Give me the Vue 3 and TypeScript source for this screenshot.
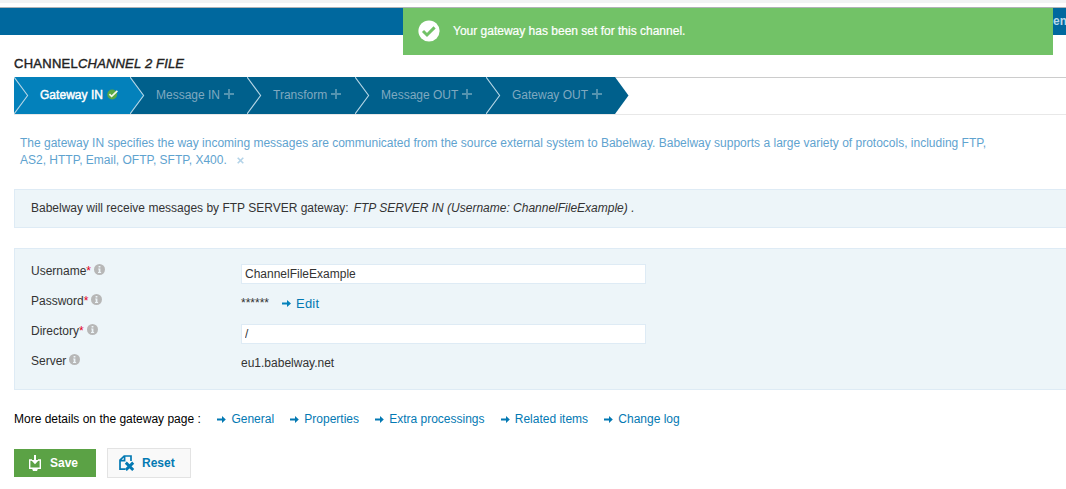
<script setup lang="ts">
interface Step { label: string; width: number; active: boolean; prev: string }
interface Field { label: string; required: boolean; kind: 'input' | 'secret' | 'text'; value: string }

const steps: Step[] = [
  { label: 'Gateway IN', width: 116, active: true, prev: '#0381bb' },
  { label: 'Message IN', width: 117, active: false, prev: '#0381bb' },
  { label: 'Transform', width: 108, active: false, prev: '#00608c' },
  { label: 'Message OUT', width: 131, active: false, prev: '#00608c' },
  { label: 'Gateway OUT', width: 129, active: false, prev: '#00608c' },
]
const fields: Field[] = [
  { label: 'Username', required: true, kind: 'input', value: 'ChannelFileExample' },
  { label: 'Password', required: true, kind: 'secret', value: '******' },
  { label: 'Directory', required: true, kind: 'input', value: '/' },
  { label: 'Server', required: false, kind: 'text', value: 'eu1.babelway.net' },
]
const links: string[] = ['General', 'Properties', 'Extra processings', 'Related items', 'Change log']
</script>

<template>
  <div class="page">
    <div class="chrome"></div>
    <header class="topbar"><span>en</span></header>
    <div class="toast">
      <svg width="22" height="22" viewBox="0 0 22 22"><circle cx="11" cy="11" r="10.6" fill="#fff" /><path d="M5 11l4 4 7.6-7.6" fill="none" stroke="#72c267" stroke-width="3" /></svg>
      <span>Your gateway has been set for this channel.</span>
    </div>
    <h1>CHANNEL<em>CHANNEL 2 FILE</em></h1>
    <nav class="steps">
      <div v-for="s in steps" :key="s.label" class="step" :class="{ active: s.active }" :style="{ width: s.width + 'px' }">
        <svg class="chevron" width="15" height="37" viewBox="0 0 15 37">
          <path d="M0 0L14 18.5L0 37Z" :fill="s.prev" />
          <path d="M0 0L13.6 18.5L0 37" fill="none" stroke="#b5d6e6" stroke-width="1.1" />
        </svg>
        <span>{{ s.label }}</span>
        <svg v-if="s.active" class="mark" width="11" height="11" viewBox="0 0 11 11"><circle cx="5.2" cy="5.5" r="4.9" fill="#58a845" /><path d="M2.4 5.2l2.2 2.2L10.4 1.8" fill="none" stroke="#f0f7e8" stroke-width="1.7" /></svg>
        <svg v-else class="mark plus" width="10" height="10" viewBox="0 0 10 10"><path d="M5 0v10M0 5h10" stroke="#5494b0" stroke-width="1.9" /></svg>
      </div>
      <svg width="14" height="37" viewBox="0 0 14 37"><path d="M0 0L13.5 18.5L0 37Z" fill="#00608c" /></svg>
    </nav>
    <p class="intro">The gateway IN specifies the way incoming messages are communicated from the source external system to Babelway. Babelway supports a large variety of protocols, including FTP,<br>AS2, HTTP, Email, OFTP, SFTP, X400.<svg width="7" height="7" viewBox="0 0 7 7"><path d="M.7.7l5.6 5.6M6.3.7L.7 6.3" stroke="#b3d3e8" stroke-width="1.6" /></svg></p>
    <section class="panel summary"><span>Babelway will receive messages by FTP SERVER gateway:</span><em>FTP SERVER IN (Username: ChannelFileExample) .</em></section>
    <section class="panel form">
      <div v-for="f in fields" :key="f.label" class="field">
        <label>{{ f.label }}<b v-if="f.required">*</b>
          <svg width="11" height="11" viewBox="0 0 11 11"><circle cx="5.5" cy="5.5" r="5.5" fill="#b7b7b7" /><path d="M4.2 4.5h2.2v3.6h.7v.9H4v-.9h.7V5.4h-.5zM4.6 2h1.8v1.6H4.6z" fill="#edf5f9" /></svg>
        </label>
        <input v-if="f.kind === 'input'" type="text" :value="f.value">
        <div v-else class="value">
          <span>{{ f.value }}</span>
          <a v-if="f.kind === 'secret'" class="edit"><svg width="9" height="7" viewBox="0 0 9 7"><path d="M0 2.5h5V0L9 3.5 5 7V4.5H0z" fill="#0381bb" /></svg>Edit</a>
        </div>
      </div>
    </section>
    <div class="links">
      <span>More details on the gateway page :</span>
      <a v-for="l in links" :key="l"><svg width="9" height="7" viewBox="0 0 9 7"><path d="M0 2.5h5V0L8.8 3.5 5 7V4.5H0z" fill="#0379b3" /></svg>{{ l }}</a>
    </div>
    <div class="actions">
      <button class="save"><svg width="14" height="16" viewBox="0 0 14 16"><path d="M4 5H1.7v8.2h10.6V5H10" fill="none" stroke="#fff" stroke-width="1.4" /><path d="M6 0h2v5h3L7 9.3 3 5h3zM4 13.5h6L9 16H5z" fill="#fff" /></svg>Save</button>
      <button class="reset"><svg width="16" height="16" viewBox="0 0 16 16"><path d="M6 14.2H1V5.2L5.2 1H12v5M5.6 1v4.6H1" fill="none" stroke="#0379b3" stroke-width="1.7" /><path d="M6.8 7.6l7.4 7.4M14.2 7.6l-7.4 7.4" stroke="#0379b3" stroke-width="2.9" /></svg>Reset</button>
    </div>
  </div>
</template>

<style>
body { margin: 0; background: #fff; }
</style>

<style scoped>
.page { position: relative; height: 489px; overflow: hidden; font: 12px/17px "Liberation Sans", Arial, sans-serif; color: #333; }
.page * { box-sizing: border-box; }
svg { display: block; flex: none; }
.chrome { height: 7px; background: #fff; border-top: 3px solid #f1f3f4; }
.topbar { height: 28px; background: #00689e; border-top: 1px solid #b0b3b6; color: #b9d9ea; font-weight: bold; text-align: right; line-height: 27px; }
.topbar span { margin-right: -1px; }
.toast { position: absolute; left: 403px; top: 8px; width: 650px; height: 47px; display: flex; align-items: center; padding: 0 0 2px 15px; gap: 13px; background: #72c267; color: #fff; -webkit-text-stroke: .2px #fff; }
.toast span { margin-top: 2px; }
h1 { margin: 20px 0 0 14px; height: 22px; font-size: 13px; line-height: 17px; font-weight: normal; letter-spacing: .27px; color: #222; -webkit-text-stroke: .4px #222; }
h1 em { letter-spacing: .17px; }
.steps { display: flex; height: 38px; margin-left: 14px; background: linear-gradient(#ccc, #ccc) top / 100% 1px no-repeat, linear-gradient(#e8e8e8, #e8e8e8) bottom / 100% 1px no-repeat; }
.step { display: flex; height: 37px; background: #00608c; color: #7fa9c0; line-height: 36px; white-space: nowrap; }
.step.active { background: #0381bb; color: #fff; -webkit-text-stroke: .45px #fff; }
.chevron { margin-right: 11px; }
.mark { margin: 12px 0 0 4px; }
.active .mark { margin-left: auto; margin-right: 12px; }
.active span { letter-spacing: .03px; }
.intro { margin: 20px 0 0 20px; height: 54px; color: #5fa3cf; white-space: nowrap; }
.intro svg { display: inline-block; margin-left: 10px; }
.panel { margin-left: 14px; background: #edf5f9; border: 1px solid #deebf5; border-right: 0; }
.summary { display: flex; gap: 5px; height: 39px; padding: 10px 16px; }
.form { height: 142px; margin-top: 20px; padding: 15px 16px; }
.field { display: flex; height: 30px; }
label { display: flex; width: 210px; line-height: 15px; }
label b { font-weight: normal; color: #e2001a; }
label svg { margin-left: 3.1px; }
input { width: 405px; height: 20px; border: 1px solid #deebf5; padding: 0 3px; background: #fff; font: 12px/18px "Liberation Sans", Arial, sans-serif; color: #333; outline: 0; }
.value { display: flex; height: 17px; margin-top: 1px; line-height: 17px; }
.edit { display: flex; align-items: center; gap: 5px; margin-left: 13px; font-size: 13px; letter-spacing: .2px; color: #0379b3; }
.links { display: flex; margin: 21px 0 0 14px; height: 17px; color: #000; }
.links a { display: flex; align-items: center; gap: 5px; margin-left: 16.2px; height: 17px; color: #0379b3; }
.links span + a { margin-left: 16.6px; }
.actions { display: flex; margin: 20px 0 0 14px; gap: 11px; }
button { display: flex; align-items: center; padding: 0; font: bold 12px/17px "Liberation Sans", Arial, sans-serif; }
.save { width: 82px; height: 28px; margin-top: 1px; padding-left: 14px; gap: 8px; border: 0; background: #5ba245; color: #fff; }
.reset { width: 84px; height: 30px; padding-left: 11px; gap: 7px; border: 1px solid #e3e3e3; background: #f9f9f9; color: #0379b3; }
</style>
